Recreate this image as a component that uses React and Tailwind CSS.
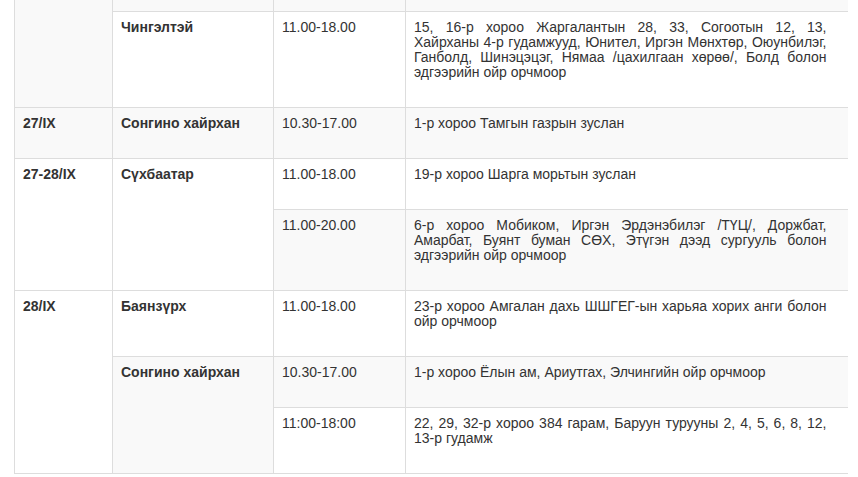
const rows = [
  { stripe: true, cells: [
    { text: '', bold: true, rowSpan: 2, top: true },
    { text: '', bold: true, top: true },
    { text: '', top: true },
    { text: '', top: true, last: true },
  ] },
  { stripe: false, cells: [
    { text: 'Чингэлтэй', bold: true },
    { text: '11.00-18.00' },
    { text: '15, 16-р хороо Жаргалантын 28, 33, Согоотын 12, 13, Хайрханы 4-р гудамжууд, Юнител, Иргэн Мөнхтөр, Оюунбилэг, Ганболд, Шинэцэцэг, Нямаа /цахилгаан хөрөө/, Болд болон эдгээрийн ойр орчмоор', last: true },
  ] },
  { stripe: true, cells: [
    { text: '27/IX', bold: true },
    { text: 'Сонгино хайрхан', bold: true },
    { text: '10.30-17.00' },
    { text: '1-р хороо Тамгын газрын зуслан', last: true },
  ] },
  { stripe: false, cells: [
    { text: '27-28/IX', bold: true, rowSpan: 2 },
    { text: 'Сүхбаатар', bold: true, rowSpan: 2 },
    { text: '11.00-18.00' },
    { text: '19-р хороо Шарга морьтын зуслан', last: true },
  ] },
  { stripe: true, cells: [
    { text: '11.00-20.00' },
    { text: '6-р хороо Мобиком, Иргэн Эрдэнэбилэг /ТҮЦ/, Доржбат, Амарбат, Буянт буман СӨХ, Этүгэн дээд сургууль болон эдгээрийн ойр орчмоор', last: true },
  ] },
  { stripe: false, cells: [
    { text: '28/IX', bold: true, rowSpan: 3 },
    { text: 'Баянзүрх', bold: true },
    { text: '11.00-18.00' },
    { text: '23-р хороо Амгалан дахь ШШГЕГ-ын харьяа хорих анги болон ойр орчмоор', last: true },
  ] },
  { stripe: true, cells: [
    { text: 'Сонгино хайрхан', bold: true, rowSpan: 2 },
    { text: '10.30-17.00' },
    { text: '1-р хороо Ёлын ам, Ариутгах, Элчингийн ойр орчмоор', last: true },
  ] },
  { stripe: false, cells: [
    { text: '11:00-18:00' },
    { text: '22, 29, 32-р хороо 384 гарам, Баруун туруунЫ 2, 4, 5, 6, 8, 12, 13-р гудамж'.replace('Ы', 'ы'), last: true },
  ] },
];

export default function App() {
  return (
    <div className="w-[858px] h-[477px] overflow-hidden bg-white font-['Liberation_Sans',Arial,sans-serif] text-[14px] leading-[15px] text-[#333]">
      <table className="ml-[14px] w-[833px] table-fixed border-collapse">
        <colgroup>
          <col className="w-[98px]" />
          <col className="w-[161px]" />
          <col className="w-[132px]" />
          <col className="w-[442px]" />
        </colgroup>
        <tbody>
          {rows.map((row, i) => (
            <tr key={i} className={row.stripe ? 'bg-[#f9f9f9]' : 'bg-white'}>
              {row.cells.map((c, j) => (
                <td
                  key={j}
                  rowSpan={c.rowSpan}
                  className={`align-top border border-[#dddddd] ${
                    c.top ? 'border-t-0 h-[11px] p-0' : 'pt-2 pl-2 pb-[27px]'
                  } ${c.last ? 'border-r-0 pr-[21px] text-justify' : 'pr-2'} ${c.bold ? 'font-bold' : ''}`}
                >
                  {c.text}
                </td>
              ))}
            </tr>
          ))}
        </tbody>
      </table>
    </div>
  );
}
